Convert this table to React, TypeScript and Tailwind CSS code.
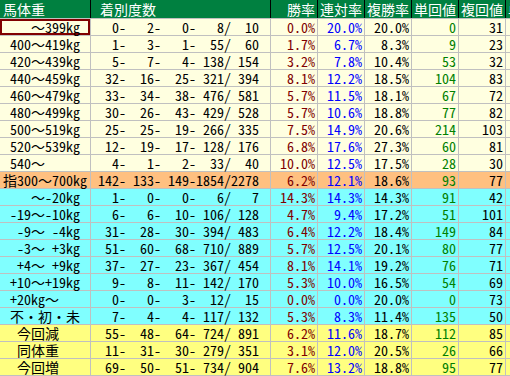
const cols = "grid grid-cols-[90px_179px_46px_46px_46px_46px_46px_46px] gap-x-px";

type Row = [string, string, string, string, string, string, string];

const groups: { bg: string; rows: Row[] }[] = [
  {
    bg: "bg-[#ffffe0]",
    rows: [
      ["    ～399kg", "  0-   2-   0-   8/  10", "0.0%", "20.0%", "20.0%", "0", "31"],
      [" 400～419kg", "  1-   3-   1-  55/  60", "1.7%", "6.7%", "8.3%", "9", "23"],
      [" 420～439kg", "  5-   7-   4- 138/ 154", "3.2%", "7.8%", "10.4%", "53", "32"],
      [" 440～459kg", " 32-  16-  25- 321/ 394", "8.1%", "12.2%", "18.5%", "104", "83"],
      [" 460～479kg", " 33-  34-  38- 476/ 581", "5.7%", "11.5%", "18.1%", "67", "72"],
      [" 480～499kg", " 30-  26-  43- 429/ 528", "5.7%", "10.6%", "18.8%", "77", "82"],
      [" 500～519kg", " 25-  25-  19- 266/ 335", "7.5%", "14.9%", "20.6%", "214", "103"],
      [" 520～539kg", " 12-  19-  17- 128/ 176", "6.8%", "17.6%", "27.3%", "60", "81"],
      [" 540～", "  4-   1-   2-  33/  40", "10.0%", "12.5%", "17.5%", "28", "30"],
    ],
  },
  {
    bg: "bg-[#ffc080]",
    rows: [["指300～700kg", "142- 133- 149-1854/2278", "6.2%", "12.1%", "18.6%", "93", "77"]],
  },
  {
    bg: "bg-[#80ffff]",
    rows: [
      ["    ～-20kg", "  1-   0-   0-   6/   7", "14.3%", "14.3%", "14.3%", "91", "42"],
      [" -19～-10kg", "  6-   6-  10- 106/ 128", "4.7%", "9.4%", "17.2%", "51", "101"],
      ["  -9～ -4kg", " 31-  28-  30- 394/ 483", "6.4%", "12.2%", "18.4%", "149", "84"],
      ["  -3～ +3kg", " 51-  60-  68- 710/ 889", "5.7%", "12.5%", "20.1%", "80", "77"],
      ["  +4～ +9kg", " 37-  27-  23- 367/ 454", "8.1%", "14.1%", "19.2%", "76", "71"],
      [" +10～+19kg", "  9-   8-  11- 142/ 170", "5.3%", "10.0%", "16.5%", "54", "69"],
      [" +20kg～", "  0-   0-   3-  12/  15", "0.0%", "0.0%", "20.0%", "0", "73"],
      [" 不・初・未", "  7-   4-   4- 117/ 132", "5.3%", "8.3%", "11.4%", "135", "50"],
    ],
  },
  {
    bg: "bg-[#ffff80]",
    rows: [
      ["  今回減", " 55-  48-  64- 724/ 891", "6.2%", "11.6%", "18.7%", "112", "85"],
      ["  同体重", " 11-  31-  30- 279/ 351", "3.1%", "12.0%", "20.5%", "26", "66"],
      ["  今回増", " 69-  50-  51- 734/ 904", "7.6%", "13.2%", "18.8%", "95", "77"],
    ],
  },
];

const headers = ["勝率", "連対率", "複勝率", "単回値", "複回値", "単勝人"];
const numColors = ["text-[#800000]", "text-[#0000ff]", "text-black", "text-[#008000]", "text-black"];

// half-width ascii runs (like the old MS Gothic look), full-width chars stay full width
function Txt({ s }: { s: string }) {
  const parts = s.split(/([\x00-\x7f]+)/).filter(Boolean);
  return (
    <>
      {parts.map((p, i) =>
        /^[\x00-\x7f]+$/.test(p) ? (
          <span key={i} className="[font-feature-settings:'hwid']">
            {p}
          </span>
        ) : (
          <span key={i}>{p}</span>
        )
      )}
    </>
  );
}

export default function App() {
  return (
    <div className="w-[510px] h-[376px] overflow-hidden bg-white font-['Noto_Sans_CJK_JP',sans-serif] text-[14px] leading-[16px]">
      <div className="w-[559px] flex flex-col gap-y-px bg-[#c0c0c0] pb-px">
        {/* header */}
        <div className={`${cols} bg-black`}>
          <div className="h-[18px] leading-[18px] bg-[#008040] text-white pl-[3px]">馬体重</div>
          <div className="h-[18px] leading-[18px] bg-[#008040] text-white pl-[9px]">着別度数</div>
          {headers.map((h) => (
            <div key={h} className="h-[18px] leading-[18px] bg-[#008040] text-white text-right pr-[2px] whitespace-nowrap">
              {h}
            </div>
          ))}
        </div>

        {/* body */}
        <div className={`${cols} gap-y-px`}>
          {groups.map((g, gi) =>
            g.rows.map((r, ri) => (
              <div key={`${gi}-${ri}`} className="contents">
                <div
                  className={`h-4 ${g.bg} pl-[3px] whitespace-pre text-black ${
                    gi === 0 && ri === 0 ? "shadow-[inset_0_0_0_2px_#800000]" : ""
                  }`}
                >
                  <Txt s={r[0]} />
                </div>
                <div className={`h-4 ${g.bg} pl-[7px] whitespace-pre text-black [font-feature-settings:'hwid']`}>{r[1]}</div>
                {r.slice(2).map((v, i) => (
                  <div key={i} className={`h-4 ${g.bg} text-right pr-[2px] [font-feature-settings:'hwid'] ${numColors[i]}`}>
                    {v}
                  </div>
                ))}
                <div className={`h-4 ${g.bg}`} />
              </div>
            ))
          )}
        </div>
      </div>
    </div>
  );
}
